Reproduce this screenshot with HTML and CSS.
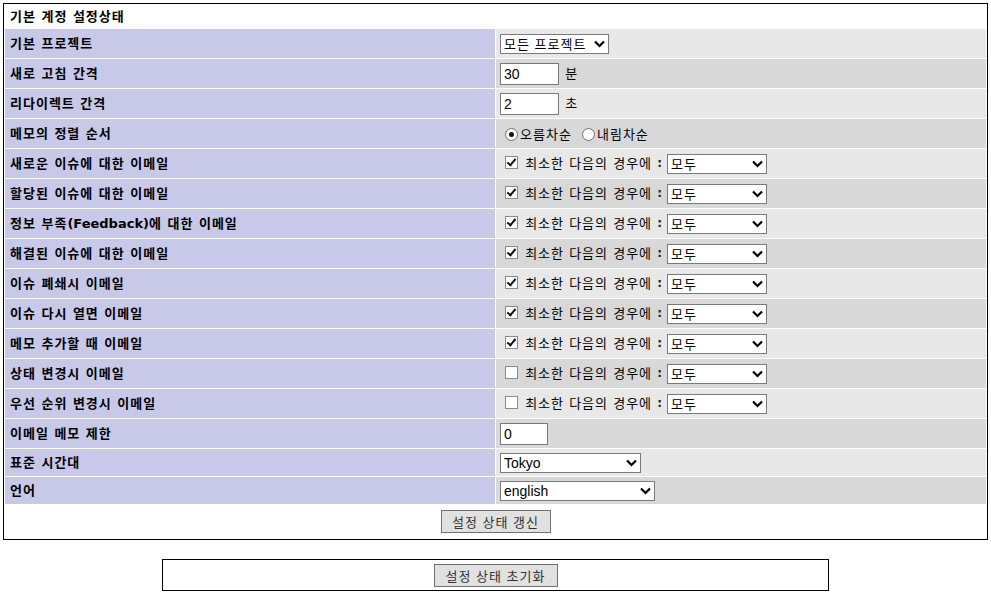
FILE: index.html
```html
<!DOCTYPE html>
<html lang="ko">
<head>
<meta charset="utf-8">
<title>계정 설정</title>
<link rel="stylesheet" href="styles.css">
</head>
<body>
<form class="prefs">
<table class="main">
  <tr class="title-row"><td class="form-title" colspan="2">기본 계정 설정상태</td></tr>
  <tr class="r1"><td class="cat">기본 프로젝트</td><td class="val">
    <span class="sel"><select class="w108"><option>모든 프로젝트</option></select><svg class="chev" width="11" height="8" viewBox="0 0 11 8"><path d="M1 1.5l4.5 4.5L10 1.5" fill="none" stroke="#000" stroke-width="2.2"/></svg></span></td></tr>
  <tr class="r2"><td class="cat">새로 고침 간격</td><td class="val"><input class="txt w58" type="text" value="30"> 분</td></tr>
  <tr class="r1"><td class="cat">리다이렉트 간격</td><td class="val"><input class="txt w58" type="text" value="2"> 초</td></tr>
  <tr class="r2"><td class="cat">메모의 정렬 순서</td><td class="val"><input class="rad" type="radio" name="o" checked>오름차순 <input class="rad" type="radio" name="o">내림차순</td></tr>
  <tr class="r1"><td class="cat">새로운 이슈에 대한 이메일</td><td class="val"><input class="chk" type="checkbox" checked> 최소한 다음의 경우에 <span class="colon">:</span><span class="sel"><select class="w99"><option>모두</option></select><svg class="chev" width="11" height="8" viewBox="0 0 11 8"><path d="M1 1.5l4.5 4.5L10 1.5" fill="none" stroke="#000" stroke-width="2.2"/></svg></span></td></tr>
  <tr class="r2"><td class="cat">할당된 이슈에 대한 이메일</td><td class="val"><input class="chk" type="checkbox" checked> 최소한 다음의 경우에 <span class="colon">:</span><span class="sel"><select class="w99"><option>모두</option></select><svg class="chev" width="11" height="8" viewBox="0 0 11 8"><path d="M1 1.5l4.5 4.5L10 1.5" fill="none" stroke="#000" stroke-width="2.2"/></svg></span></td></tr>
  <tr class="r1"><td class="cat">정보 부족<span class="latin-b">(Feedback)</span>에 대한 이메일</td><td class="val"><input class="chk" type="checkbox" checked> 최소한 다음의 경우에 <span class="colon">:</span><span class="sel"><select class="w99"><option>모두</option></select><svg class="chev" width="11" height="8" viewBox="0 0 11 8"><path d="M1 1.5l4.5 4.5L10 1.5" fill="none" stroke="#000" stroke-width="2.2"/></svg></span></td></tr>
  <tr class="r2"><td class="cat">해결된 이슈에 대한 이메일</td><td class="val"><input class="chk" type="checkbox" checked> 최소한 다음의 경우에 <span class="colon">:</span><span class="sel"><select class="w99"><option>모두</option></select><svg class="chev" width="11" height="8" viewBox="0 0 11 8"><path d="M1 1.5l4.5 4.5L10 1.5" fill="none" stroke="#000" stroke-width="2.2"/></svg></span></td></tr>
  <tr class="r1"><td class="cat">이슈 폐쇄시 이메일</td><td class="val"><input class="chk" type="checkbox" checked> 최소한 다음의 경우에 <span class="colon">:</span><span class="sel"><select class="w99"><option>모두</option></select><svg class="chev" width="11" height="8" viewBox="0 0 11 8"><path d="M1 1.5l4.5 4.5L10 1.5" fill="none" stroke="#000" stroke-width="2.2"/></svg></span></td></tr>
  <tr class="r2"><td class="cat">이슈 다시 열면 이메일</td><td class="val"><input class="chk" type="checkbox" checked> 최소한 다음의 경우에 <span class="colon">:</span><span class="sel"><select class="w99"><option>모두</option></select><svg class="chev" width="11" height="8" viewBox="0 0 11 8"><path d="M1 1.5l4.5 4.5L10 1.5" fill="none" stroke="#000" stroke-width="2.2"/></svg></span></td></tr>
  <tr class="r1"><td class="cat">메모 추가할 때 이메일</td><td class="val"><input class="chk" type="checkbox" checked> 최소한 다음의 경우에 <span class="colon">:</span><span class="sel"><select class="w99"><option>모두</option></select><svg class="chev" width="11" height="8" viewBox="0 0 11 8"><path d="M1 1.5l4.5 4.5L10 1.5" fill="none" stroke="#000" stroke-width="2.2"/></svg></span></td></tr>
  <tr class="r2"><td class="cat">상태 변경시 이메일</td><td class="val"><input class="chk" type="checkbox"> 최소한 다음의 경우에 <span class="colon">:</span><span class="sel"><select class="w99"><option>모두</option></select><svg class="chev" width="11" height="8" viewBox="0 0 11 8"><path d="M1 1.5l4.5 4.5L10 1.5" fill="none" stroke="#000" stroke-width="2.2"/></svg></span></td></tr>
  <tr class="r1"><td class="cat">우선 순위 변경시 이메일</td><td class="val"><input class="chk" type="checkbox"> 최소한 다음의 경우에 <span class="colon">:</span><span class="sel"><select class="w99"><option>모두</option></select><svg class="chev" width="11" height="8" viewBox="0 0 11 8"><path d="M1 1.5l4.5 4.5L10 1.5" fill="none" stroke="#000" stroke-width="2.2"/></svg></span></td></tr>
  <tr class="r2"><td class="cat">이메일 메모 제한</td><td class="val"><input class="txt w47" type="text" value="0"></td></tr>
  <tr class="r1 short"><td class="cat">표준 시간대</td><td class="val"><span class="sel"><select class="w140 latin"><option>Tokyo</option></select><svg class="chev" width="11" height="8" viewBox="0 0 11 8"><path d="M1 1.5l4.5 4.5L10 1.5" fill="none" stroke="#000" stroke-width="2.2"/></svg></span></td></tr>
  <tr class="r2 short"><td class="cat">언어</td><td class="val"><span class="sel"><select class="w154 latin"><option>english</option></select><svg class="chev" width="11" height="8" viewBox="0 0 11 8"><path d="M1 1.5l4.5 4.5L10 1.5" fill="none" stroke="#000" stroke-width="2.2"/></svg></span></td></tr>
  <tr class="btn-row"><td class="center" colspan="2"><button class="btn w109" type="button">설정 상태 갱신</button></td></tr>
</table>
</form>
<div class="spacer"></div>
<table class="reset">
  <tr><td class="center"><button class="btn w123" type="button">설정 상태 초기화</button></td></tr>
</table>
</body>
</html>
```

FILE: styles.css
```css
html, body {
  margin: 0;
  padding: 0;
  background: #fff;
}
body {
  margin: 3px;
  font-family: "DejaVu Sans", "Noto Sans CJK KR", sans-serif;
  font-size: 13px;
  color: #000;
}
.prefs { margin: 0; }
table {
  border-collapse: separate;
  border-spacing: 1px;
  border: 1px solid #000;
  background: #fff;
}
.main { width: 985px; }
td {
  padding: 0 4px;
  vertical-align: middle;
  line-height: 16px;
  white-space: nowrap;
}
.form-title {
  font-weight: bold;
  padding-left: 5px;
  letter-spacing: 1px;
}
.main tr td { height: 29px; }
.main tr.title-row td { height: 23px; }
.main tr.short td { height: 27px; }
.main tr.btn-row td { height: 33px; }
.cat {
  width: 50%;
  background: #c8c8e8;
  font-weight: bold;
  padding-left: 5px;
  letter-spacing: 1px;
}
.latin-b { letter-spacing: 0; }
.val {
  font-family: "Noto Sans CJK KR", "DejaVu Sans", sans-serif;
  letter-spacing: 1px;
  word-spacing: 0.5px;
}
.colon {
  display: inline-block;
  font-family: "DejaVu Sans", sans-serif;
  font-weight: bold;
  font-size: 12px;
  color: #222;
  margin: 0 5px 0 0;
  letter-spacing: 0;
}
.r1 .val { background: #e8e8e8; }
.r2 .val { background: #d8d8d8; }
.center { text-align: center; }

.txt {
  box-sizing: border-box;
  height: 22px;
  border: 1px solid #7a7a7a;
  background: #fff;
  font-family: "Liberation Sans", sans-serif;
  font-size: 14px;
  letter-spacing: 0;
  padding: 0 3px;
  margin: 0 1px 0 0;
  vertical-align: middle;
}
.w58 { width: 59px; }
.w47 { width: 48px; }

.sel {
  position: relative;
  display: inline-block;
  vertical-align: middle;
  line-height: 0;
  letter-spacing: 0;
  word-spacing: 0;
}
.sel select {
  -webkit-appearance: none;
  appearance: none;
  box-sizing: border-box;
  height: 20px;
  border: 1px solid #7a7a7a;
  border-radius: 0;
  background: #fff;
  font-family: "Noto Sans CJK KR", sans-serif;
  font-size: 13px;
  letter-spacing: 1px;
  color: #000;
  padding: 0 16px 0 3px;
  margin: 0;
  line-height: 18px;
}
.sel select.latin {
  font-family: "Liberation Sans", sans-serif;
  font-size: 14px;
  letter-spacing: 0;
}
.chev {
  position: absolute;
  right: 4px;
  top: 6px;
  pointer-events: none;
}
.w108 { width: 109px; }
.w99 { width: 100px; }
.w140 { width: 141px; }
.w154 { width: 155px; }

.chk, .rad {
  -webkit-appearance: none;
  appearance: none;
  position: relative;
  box-sizing: border-box;
  width: 13px;
  height: 13px;
  margin: 0 2px 0 5px;
  vertical-align: -2px;
  background: #fff;
  border: 1px solid #8a8a8a;
}
.chk:checked::after {
  content: "";
  position: absolute;
  left: 3px;
  top: 0px;
  width: 3px;
  height: 7px;
  border: solid #111;
  border-width: 0 2px 2px 0;
  transform: rotate(40deg);
}
.rad {
  border-radius: 50%;
  border-color: #6e6e6e;
  margin-right: 2px;
}
.rad:checked::after {
  content: "";
  position: absolute;
  left: 3px;
  top: 3px;
  width: 5px;
  height: 5px;
  border-radius: 50%;
  background: #111;
}

.btn {
  box-sizing: border-box;
  height: 23px;
  border: 1px solid #707070;
  background: #e1e1e1;
  font-family: "Noto Sans CJK KR", sans-serif;
  font-size: 13px;
  letter-spacing: 1px;
  color: #333;
  padding: 0;
  margin: 0;
  vertical-align: middle;
}
.w109 { width: 110px; }
.w123 { width: 124px; }

.spacer { height: 19px; }
.reset {
  width: 667px;
  margin: 0 auto;
  border-spacing: 0;
}
.reset td { height: 30px; padding: 0; }
```
